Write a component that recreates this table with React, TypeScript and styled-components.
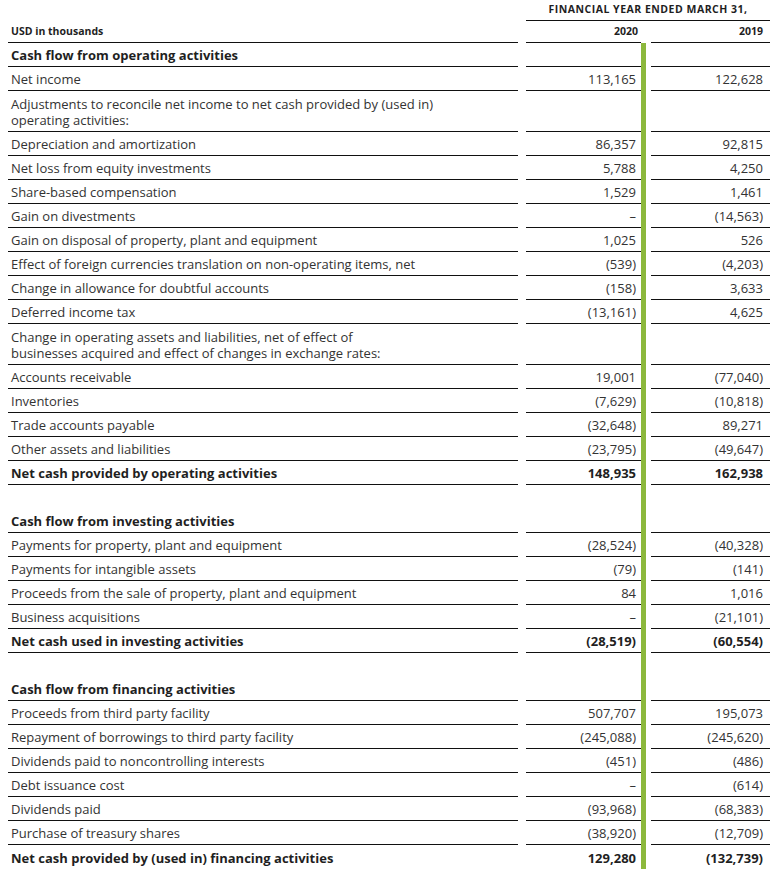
import styled, { createGlobalStyle, css } from 'styled-components'

const GlobalStyle = createGlobalStyle`
  html, body {
    margin: 0;
    padding: 0;
    background: #ffffff;
  }
  body {
    font-family: 'Open Sans', 'Liberation Sans', Arial, sans-serif;
    color: #333333;
  }
`

type Kind = 'item' | 'section' | 'total' | 'blank'

type Line = {
  label?: string
  y2020?: string
  y2019?: string
  kind?: Kind
}

const lines: Line[] = [
  { label: 'Cash flow from operating activities', kind: 'section' },
  { label: 'Net income', y2020: '113,165', y2019: '122,628' },
  { label: 'Adjustments to reconcile net income to net cash provided by (used in)\noperating activities:' },
  { label: 'Depreciation and amortization', y2020: '86,357', y2019: '92,815' },
  { label: 'Net loss from equity investments', y2020: '5,788', y2019: '4,250' },
  { label: 'Share-based compensation', y2020: '1,529', y2019: '1,461' },
  { label: 'Gain on divestments', y2020: '–', y2019: '(14,563)' },
  { label: 'Gain on disposal of property, plant and equipment', y2020: '1,025', y2019: '526' },
  { label: 'Effect of foreign currencies translation on non-operating items, net', y2020: '(539)', y2019: '(4,203)' },
  { label: 'Change in allowance for doubtful accounts', y2020: '(158)', y2019: '3,633' },
  { label: 'Deferred income tax', y2020: '(13,161)', y2019: '4,625' },
  { label: 'Change in operating assets and liabilities, net of effect of\nbusinesses acquired and effect of changes in exchange rates:' },
  { label: 'Accounts receivable', y2020: '19,001', y2019: '(77,040)' },
  { label: 'Inventories', y2020: '(7,629)', y2019: '(10,818)' },
  { label: 'Trade accounts payable', y2020: '(32,648)', y2019: '89,271' },
  { label: 'Other assets and liabilities', y2020: '(23,795)', y2019: '(49,647)' },
  { label: 'Net cash provided by operating activities', y2020: '148,935', y2019: '162,938', kind: 'total' },
  { kind: 'blank' },
  { label: 'Cash flow from investing activities', kind: 'section' },
  { label: 'Payments for property, plant and equipment', y2020: '(28,524)', y2019: '(40,328)' },
  { label: 'Payments for intangible assets', y2020: '(79)', y2019: '(141)' },
  { label: 'Proceeds from the sale of property, plant and equipment', y2020: '84', y2019: '1,016' },
  { label: 'Business acquisitions', y2020: '–', y2019: '(21,101)' },
  { label: 'Net cash used in investing activities', y2020: '(28,519)', y2019: '(60,554)', kind: 'total' },
  { kind: 'blank' },
  { label: 'Cash flow from financing activities', kind: 'section' },
  { label: 'Proceeds from third party facility', y2020: '507,707', y2019: '195,073' },
  { label: 'Repayment of borrowings to third party facility', y2020: '(245,088)', y2019: '(245,620)' },
  { label: 'Dividends paid to noncontrolling interests', y2020: '(451)', y2019: '(486)' },
  { label: 'Debt issuance cost', y2020: '–', y2019: '(614)' },
  { label: 'Dividends paid', y2020: '(93,968)', y2019: '(68,383)' },
  { label: 'Purchase of treasury shares', y2020: '(38,920)', y2019: '(12,709)' },
  { label: 'Net cash provided by (used in) financing activities', y2020: '129,280', y2019: '(132,739)', kind: 'total' },
]

const Statement = styled.div`
  width: 762px;
  padding-left: 8px;
`

const Row = styled.div<{ $height: number }>`
  display: grid;
  grid-template-columns: 510px 8px 115px 5px 5px 119px;
  height: ${({ $height }) => $height}px;
`

const ruled = css<{ $ruled?: boolean }>`
  box-sizing: border-box;
  ${({ $ruled }) =>
    $ruled &&
    css`
      border-bottom: 1px solid #111111;
    `}
`

const LabelCell = styled.div<{ $ruled?: boolean; $bold?: boolean }>`
  ${ruled}
  display: flex;
  align-items: flex-end;
  padding: 0 0 3px 3px;
  font-size: 13px;
  line-height: 16px;
  white-space: pre-line;
  font-weight: ${({ $bold }) => ($bold ? 700 : 400)};
  color: ${({ $bold }) => ($bold ? '#1f1f1f' : '#333333')};
`

const NumCell = styled.div<{ $ruled?: boolean; $bold?: boolean; $pad: number }>`
  ${ruled}
  display: flex;
  align-items: flex-end;
  justify-content: flex-end;
  padding: 0 ${({ $pad }) => $pad}px 3px 0;
  font-size: 13px;
  line-height: 16px;
  font-weight: ${({ $bold }) => ($bold ? 700 : 400)};
  color: ${({ $bold }) => ($bold ? '#1f1f1f' : '#333333')};
`

const Spacer = styled.div``

const Bar = styled.div<{ $on?: boolean }>`
  background: ${({ $on }) => ($on ? '#8cb83c' : 'transparent')};
`

const SmallHead = styled.div<{ $pad?: number }>`
  box-sizing: border-box;
  border-bottom: 1px solid #111111;
  display: flex;
  align-items: flex-end;
  justify-content: flex-end;
  padding: 0 ${({ $pad }) => $pad ?? 0}px 4px 0;
  font-size: 10.5px;
  line-height: 14px;
  font-weight: 700;
  color: #1f1f1f;
`

const UnitHead = styled(SmallHead)`
  justify-content: flex-start;
  padding-left: 3px;
`

const PeriodHead = styled.div`
  grid-column: 3 / 7;
  box-sizing: border-box;
  border-bottom: 1px solid #111111;
  display: flex;
  align-items: flex-end;
  justify-content: center;
  padding-bottom: 4px;
  font-size: 10.5px;
  line-height: 14px;
  font-weight: 700;
  letter-spacing: 0.5px;
  color: #1f1f1f;
`

export default function App() {
  return (
    <>
      <GlobalStyle />
      <Statement>
        <Row $height={21}>
          <Spacer />
          <Spacer />
          <PeriodHead>FINANCIAL YEAR ENDED MARCH 31,</PeriodHead>
        </Row>

        <Row $height={22}>
          <UnitHead>USD in thousands</UnitHead>
          <Spacer />
          <SmallHead $pad={3}>2020</SmallHead>
          <Spacer />
          <Spacer />
          <SmallHead $pad={7}>2019</SmallHead>
        </Row>

        {lines.map((line, i) => {
          const kind = line.kind ?? 'item'
          const isLast = i === lines.length - 1
          const ruledRow = kind !== 'blank' && !isLast
          const bold = kind === 'section' || kind === 'total'
          const twoLine = line.label?.includes('\n')

          return (
            <Row key={i} $height={twoLine ? 41 : 24}>
              <LabelCell $ruled={ruledRow} $bold={bold}>
                {line.label}
              </LabelCell>
              <Spacer />
              <NumCell $ruled={ruledRow} $bold={bold} $pad={5}>
                {line.y2020}
              </NumCell>
              <Bar $on />
              <Spacer />
              <NumCell $ruled={ruledRow} $bold={bold} $pad={7}>
                {line.y2019}
              </NumCell>
            </Row>
          )
        })}
      </Statement>
    </>
  )
}
